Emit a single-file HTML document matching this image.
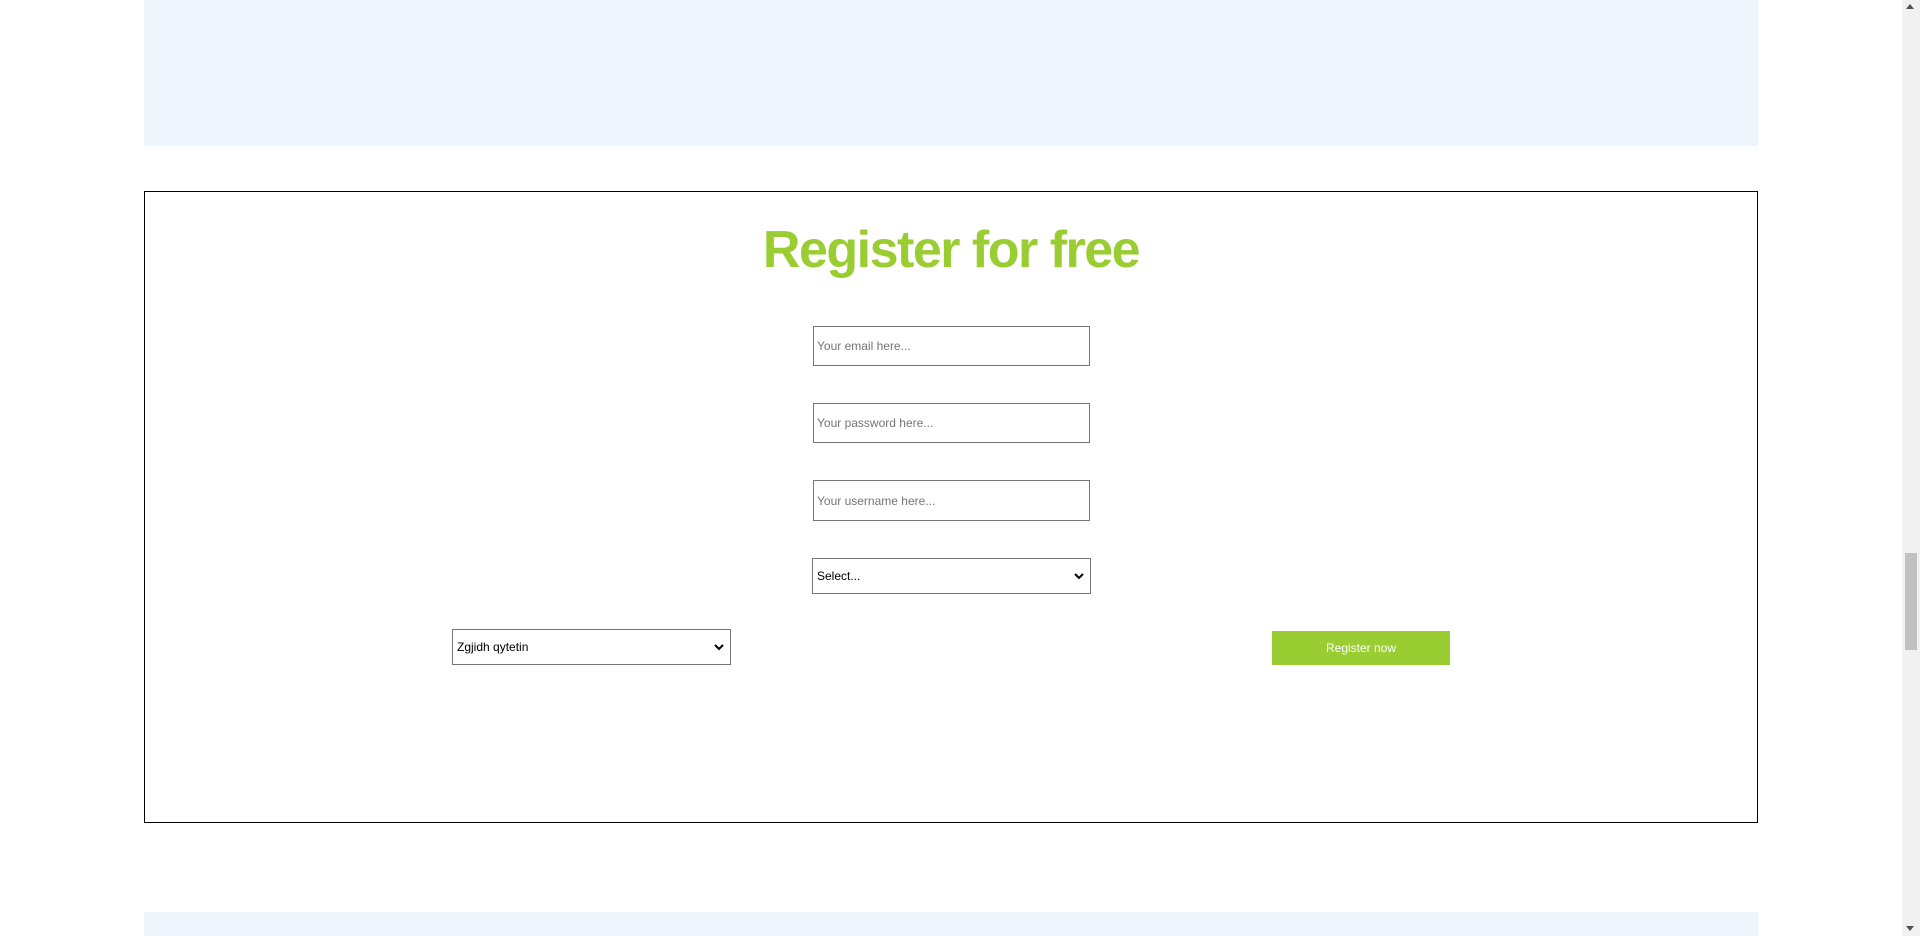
<!DOCTYPE html>
<html><head><meta charset="utf-8"><style>
html,body{margin:0;padding:0;width:1920px;height:936px;overflow:hidden;background:#fff;font-family:"Liberation Sans",Arial,sans-serif}
.a{position:absolute;box-sizing:border-box}
.lb{background:#eff6fd}
.inp{border:1px solid #767676;background:#fff;font-size:12px;color:#757575;padding-left:3px;display:flex;align-items:center}
.sel{border:1px solid #767676;background:#fff;font-size:12px;color:#000;padding-left:4px;display:flex;align-items:center}
.sel svg{position:absolute;right:6px;top:50%;margin-top:-4px}
</style></head><body>
<div class="a lb" style="left:144px;top:0;width:1614px;height:146px"></div>
<div class="a" style="left:144px;top:191px;width:1614px;height:632px;border:1px solid #000"></div>
<div class="a" style="left:144px;top:214px;width:1614px;text-align:center;color:#9acd32;font-size:52px;letter-spacing:-1.5px;line-height:72px;font-weight:bold">Register for free</div>
<div class="a inp" style="left:813px;top:326px;width:277px;height:40px">Your email here...</div>
<div class="a inp" style="left:813px;top:403px;width:277px;height:40px">Your password here...</div>
<div class="a inp" style="left:813px;top:480px;width:277px;height:41px">Your username here...</div>
<div class="a sel" style="left:812px;top:558px;width:279px;height:36px">Select...<svg width="10" height="8" viewBox="0 0 10 8"><path d="M1 2l4 4 4-4" stroke="#000" stroke-width="2" fill="none"/></svg></div>
<div class="a sel" style="left:452px;top:629px;width:279px;height:36px">Zgjidh qytetin<svg width="10" height="8" viewBox="0 0 10 8"><path d="M1 2l4 4 4-4" stroke="#000" stroke-width="2" fill="none"/></svg></div>
<div class="a" style="left:1272px;top:631px;width:178px;height:34px;background:#9acd32;color:#fff;font-size:12px;display:flex;align-items:center;justify-content:center">Register now</div>
<div class="a lb" style="left:144px;top:912px;width:1614px;height:24px"></div>
<div class="a" style="left:1902px;top:0;width:18px;height:936px;background:#f1f1f1"></div>
<div class="a" style="left:1905px;top:553px;width:12px;height:97px;background:#c1c1c1"></div>
<div class="a" style="left:1906px;top:4px;width:0;height:0;border-left:4px solid transparent;border-right:4px solid transparent;border-bottom:5px solid #505050"></div>
<div class="a" style="left:1906px;top:926px;width:0;height:0;border-left:4px solid transparent;border-right:4px solid transparent;border-top:5px solid #505050"></div>
</body></html>
